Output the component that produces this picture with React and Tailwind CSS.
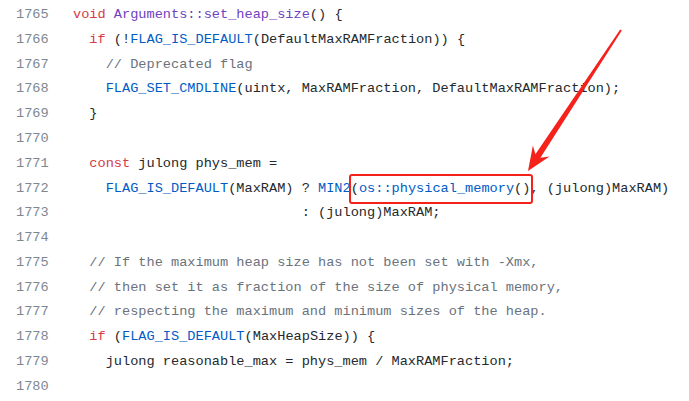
import React from "react";

const K = ({ children }) => <span className="text-[#d73a49]">{children}</span>;
const E = ({ children }) => <span className="text-[#6f42c1]">{children}</span>;
const C = ({ children }) => <span className="text-[#005cc5]">{children}</span>;
const M = ({ children }) => <span className="text-[#6a737d]">{children}</span>;

const lines = [
  [1765, <><K>void</K> <E>Arguments::set_heap_size</E>() {"{"}</>],
  [1766, <>{"  "}<K>if</K> (!<C>FLAG_IS_DEFAULT</C>(DefaultMaxRAMFraction)) {"{"}</>],
  [1767, <>{"    "}<M>// Deprecated flag</M></>],
  [1768, <>{"    "}<C>FLAG_SET_CMDLINE</C>(uintx, MaxRAMFraction, DefaultMaxRAMFraction);</>],
  [1769, <>{"  }"}</>],
  [1770, <></>],
  [1771, <>{"  "}<K>const</K> julong phys_mem =</>],
  [1772, <>{"    "}<C>FLAG_IS_DEFAULT</C>(MaxRAM) ? <C>MIN2</C>(<C>os::physical_memory</C>(), (julong)MaxRAM)</>],
  [1773, <>{"                            "}: (julong)MaxRAM;</>],
  [1774, <></>],
  [1775, <>{"  "}<M>// If the maximum heap size has not been set with -Xmx,</M></>],
  [1776, <>{"  "}<M>// then set it as fraction of the size of physical memory,</M></>],
  [1777, <>{"  "}<M>// respecting the maximum and minimum sizes of the heap.</M></>],
  [1778, <>{"  "}<K>if</K> (<C>FLAG_IS_DEFAULT</C>(MaxHeapSize)) {"{"}</>],
  [1779, <>{"    "}julong reasonable_max = phys_mem / MaxRAMFraction;</>],
  [1780, <></>],
];

export default function App() {
  return (
    <div
      className="relative w-[689px] h-[401px] overflow-hidden bg-white pt-[3px] text-[#24292e]"
      style={{ fontFamily: '"Liberation Mono", "DejaVu Sans Mono", monospace' }}
    >
      <div className="flex flex-col text-[13.62px]">
        {lines.map(([n, code]) => (
          <div key={n} className="flex h-[24.77px] items-center whitespace-pre">
            <div className="w-[73px] shrink-0 pl-[16px] text-[#7d8793]">{n}</div>
            <div>{code}</div>
          </div>
        ))}
      </div>
      <div className="absolute left-[349px] top-[174px] h-[30px] w-[184px] rounded-[3px] border-[2.5px] border-[#f5221b]" />
      <svg className="absolute left-0 top-0" width="689" height="401" viewBox="0 0 689 401">
        <polygon
          fill="#f5221b"
          points="528,171 549.5,156.5 540.4,157.7 621.8,30.6 620.2,29.4 535.4,154.3 532.9,145.5"
        />
      </svg>
    </div>
  );
}
